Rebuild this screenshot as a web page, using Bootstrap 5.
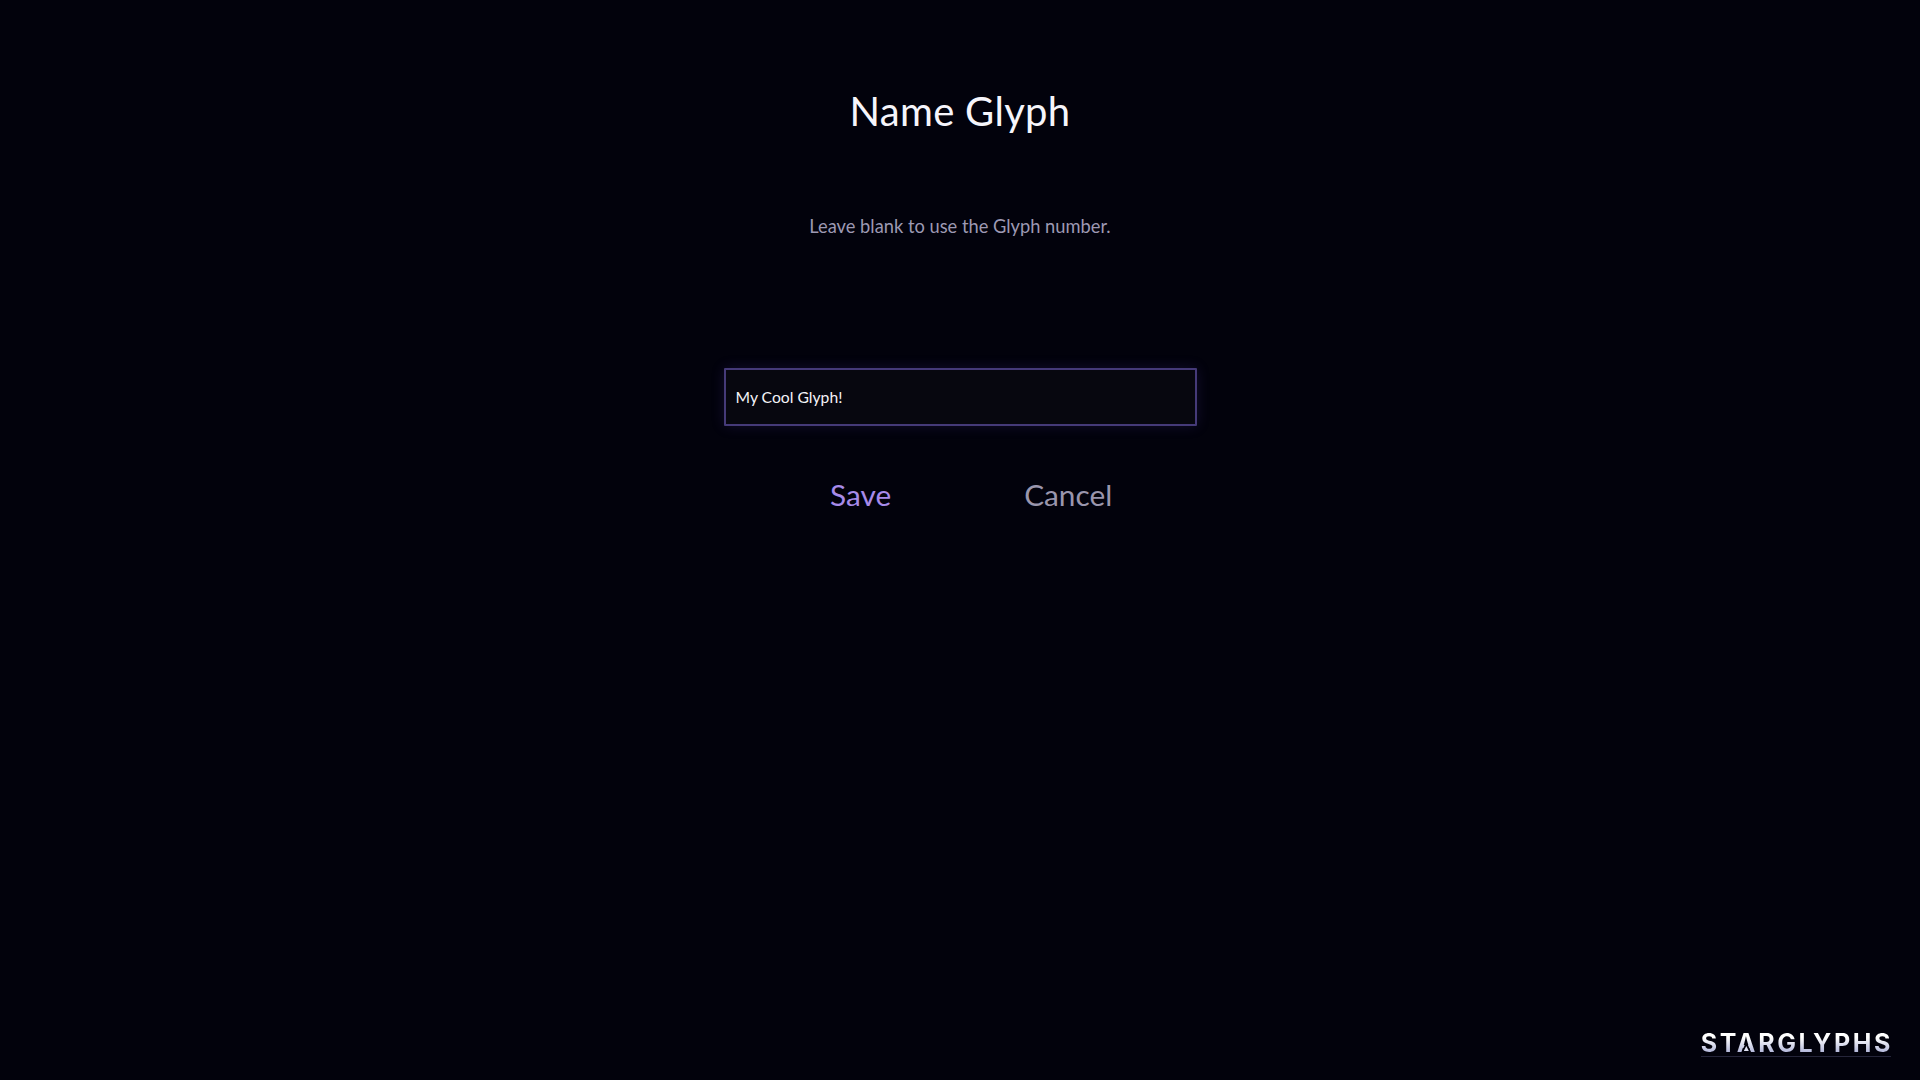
<!DOCTYPE html>
<html lang="en">
<head>
<meta charset="utf-8">
<title>Name Glyph</title>
<link href="https://cdn.jsdelivr.net/npm/bootstrap@5.3.0/dist/css/bootstrap.min.css" rel="stylesheet">
<style>
html,body{height:100%}
body{background:#02020c;font-family:"Lato","Noto Sans",sans-serif;overflow:hidden}
.screen{height:1080px;padding-top:86px}
.dlg-title{font-size:40px;font-weight:400;line-height:50px;color:#f6f5fb;margin:0 0 78px;letter-spacing:.3px}
.dlg-sub{font-size:18.3px;line-height:24px;color:#9d99b3;margin:0 0 130px}
.name-input.form-control{width:473px;height:58px;margin-left:1px;background:#07070f;border:2px solid #453a78;border-radius:1px;color:#f4f3f8;font-size:15.7px;padding:0 9.5px;box-shadow:0 0 14px rgba(85,65,170,.2)}
.name-input.form-control:focus{background:#07070f;color:#f4f3f8;border-color:#453a78;box-shadow:0 0 14px rgba(85,65,170,.2)}
.dlg-actions{margin-top:41px;width:474px;padding-left:107px;gap:133px}
.act{background:none;border:0;padding:0;font-size:29.8px;line-height:56px}
.act-save{color:#a78bea}
.act-cancel{color:#9a96ad}
.brand-wrap{position:absolute;right:29px;bottom:23px;border-bottom:1px solid #25253a;padding-bottom:2px}
.brand{display:block;position:relative;font-family:"Inter",sans-serif;font-weight:700;font-size:25px;line-height:22px;letter-spacing:2.6px;margin-right:-2px;background:linear-gradient(180deg,#ffffff 25%,#a9aed6 100%);-webkit-background-clip:text;background-clip:text;color:transparent}
.brand::after{content:"";position:absolute;left:41px;bottom:2px;width:9px;height:11px;background:#02020c;clip-path:polygon(50% 0,100% 100%,0 100%)}
.brand::before{content:"";position:absolute;z-index:1;left:43px;bottom:3px;width:5px;height:5px;background:#dfe1f2;clip-path:polygon(50% 0,100% 100%,0 100%)}
</style>
</head>
<body>
<main class="screen d-flex flex-column align-items-center text-center position-relative">
  <h1 class="dlg-title">Name Glyph</h1>
  <p class="dlg-sub">Leave blank to use the Glyph number.</p>
  <input class="form-control name-input" type="text" value="My Cool Glyph!" aria-label="Glyph name">
  <div class="dlg-actions d-flex">
    <button type="button" class="act act-save">Save</button>
    <button type="button" class="act act-cancel">Cancel</button>
  </div>
  <div class="brand-wrap"><span class="brand">STARGLYPHS</span></div>
</main>
<script src="https://cdn.jsdelivr.net/npm/bootstrap@5.3.0/dist/js/bootstrap.bundle.min.js"></script>
</body>
</html>
